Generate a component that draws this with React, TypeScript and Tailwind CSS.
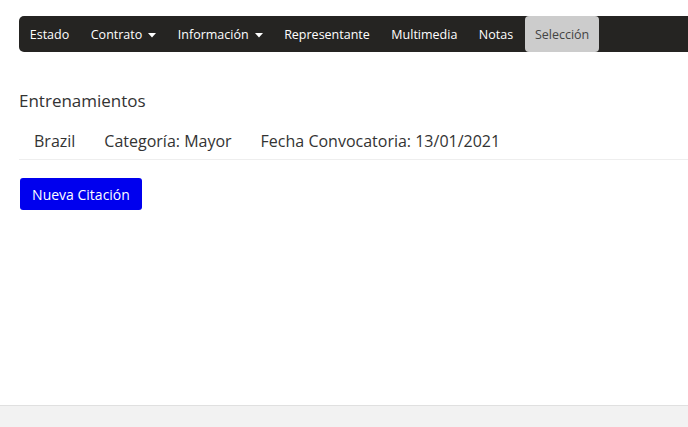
import { Fragment } from 'react'

const tabs = [
  { label: 'Estado' },
  { label: 'Contrato', caret: true },
  { label: 'Información', caret: true },
  { label: 'Representante' },
  { label: 'Multimedia' },
  { label: 'Notas' },
  { label: 'Selección', active: true },
]

function Caret() {
  return (
    <svg width="8" height="5" viewBox="0 0 8 5" className="ml-[6px] mt-[1px]">
      <path d="M0 0 L8 0 L4 4.5 Z" fill="currentColor" />
    </svg>
  )
}

export default function App() {
  return (
    <div
      className="min-h-[427px] flex flex-col bg-white text-[#333]"
      style={{ fontFamily: '"Open Sans", "Noto Sans", sans-serif' }}
    >
      <div className="flex-1 pt-4 pl-[19px]">
        {/* Navbar */}
        <nav className="flex items-stretch h-9 bg-[#252422] rounded-l-[5px]">
          {tabs.map((t) => (
            <Fragment key={t.label}>
              <div
                className={`flex items-center pt-[2px] text-[12.5px] ${
                  t.active
                    ? 'bg-[#cccccc] text-[#444] rounded-[4px] px-[10px] ml-[1px]'
                    : 'text-white px-[10.75px]'
                }`}
              >
                {t.label}
                {t.caret && <Caret />}
              </div>
            </Fragment>
          ))}
        </nav>

        {/* Content */}
        <h2 className="mt-[37px] text-[17px] leading-6">Entrenamientos</h2>
        <div className="flex items-center h-[38px] mt-[9px] pl-[15px] text-[16px] border-b border-[#eeeeee] gap-[29px]">
          <span>Brazil</span>
          <span>Categoría: Mayor</span>
          <span>Fecha Convocatoria: 13/01/2021</span>
        </div>
        <button className="mt-[18px] ml-[1px] h-8 w-[122px] bg-[#0000ee] text-white text-[14px] rounded-[3px]">
          Nueva Citación
        </button>
      </div>

      <footer className="h-[22px] bg-[#f2f2f2] border-t border-[#e0e0e0]" />
    </div>
  )
}
